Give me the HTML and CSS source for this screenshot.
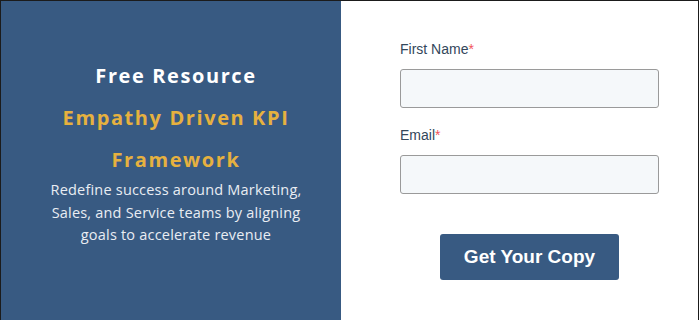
FILE: index.html
```html
<!DOCTYPE html>
<html lang="en">
<head>
    <meta charset="UTF-8">
    <meta name="viewport" content="width=device-width, initial-scale=1.0">
    <title>Free Resource - Empathy Driven KPI Framework</title>
    <link rel="stylesheet" href="styles.css">
</head>
<body>
    <div class="offer">
        <div class="offer-intro">
            <h2 class="kicker">Free Resource</h2>
            <h1 class="title">Empathy Driven KPI Framework</h1>
            <p class="summary">Redefine success around Marketing, Sales, and Service teams by aligning goals to accelerate revenue</p>
        </div>

        <form class="offer-form" onsubmit="return false">
            <div class="field">
                <label for="firstname">First Name<span class="req">*</span></label>
                <input type="text" id="firstname" name="firstname">
            </div>
            <div class="field">
                <label for="email">Email<span class="req">*</span></label>
                <input type="email" id="email" name="email">
            </div>
            <div class="actions">
                <button type="submit">Get Your Copy</button>
            </div>
        </form>
    </div>
</body>
</html>
```

FILE: styles.css
```css
body {
    margin: 0;
    background: white;
}
.offer {
    display: flex;
    width: 697px;
    height: 320px;
    border: 1px solid #1b1b1b;
    border-bottom: none;
}
.offer-intro {
    width: 340px;
    flex-shrink: 0;
    background: #385a82;
    text-align: center;
    font-family: "Open Sans", Lato, sans-serif;
    padding: 54px 31px 0 41px;
    box-sizing: border-box;
}
.kicker, .title {
    margin: 0;
    font-size: 20px;
    font-weight: 700;
    line-height: 42px;
    letter-spacing: 1.6px;
}
.kicker {
    color: white;
}
.title {
    color: #e6b13f;
    padding: 0 10px;
}
.summary {
    margin: -2px 0 0;
    color: #e9edf3;
    font-size: 14.5px;
    line-height: 22.5px;
    letter-spacing: 0.2px;
}
.offer-form {
    flex: 1;
    padding: 38px 39px 0 59px;
    font-family: "Liberation Sans", Arial, sans-serif;
}
.field {
    margin-bottom: 17px;
}
.field label {
    display: block;
    color: #33475b;
    font-size: 14px;
    line-height: 20px;
    margin-bottom: 10px;
}
.req {
    color: #f2545b;
}
.field input {
    display: block;
    width: 100%;
    height: 39px;
    box-sizing: border-box;
    background: #f5f8fa;
    border: 1px solid #9a9a9a;
    border-radius: 3px;
}
.actions {
    text-align: center;
    padding-top: 23px;
}
button {
    width: 179px;
    height: 46px;
    background: #385a82;
    color: white;
    border: none;
    border-radius: 3px;
    font-family: "Liberation Sans", Arial, sans-serif;
    font-size: 19px;
    font-weight: 700;
    cursor: pointer;
}
button:hover {
    background: #2f4d70;
}
```
